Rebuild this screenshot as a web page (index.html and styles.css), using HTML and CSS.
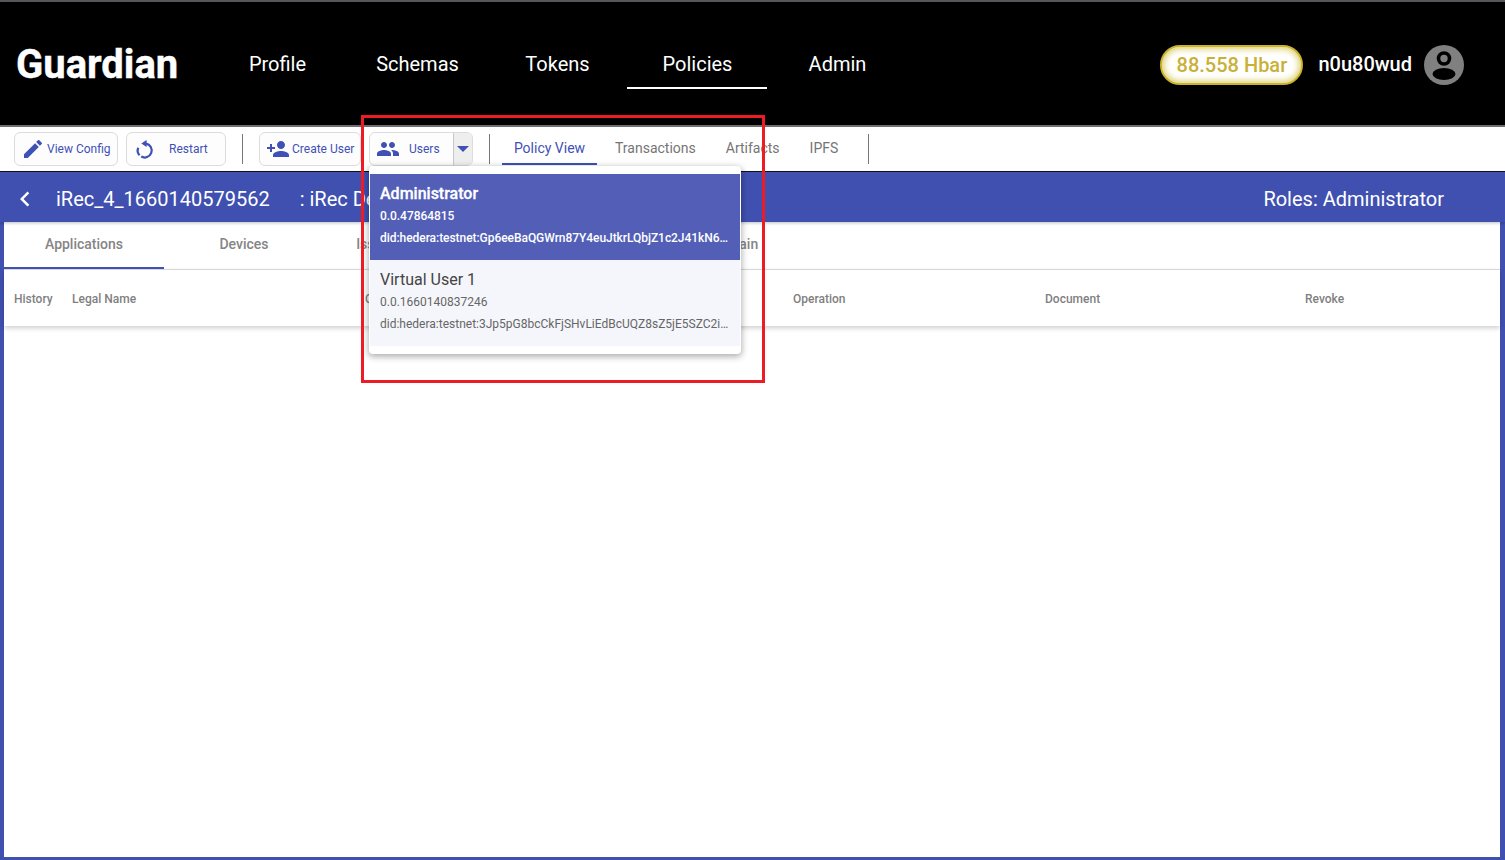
FILE: index.html
```html
<!DOCTYPE html>
<html lang="en">
<head>
    <meta charset="UTF-8">
    <meta name="viewport" content="width=device-width, initial-scale=1.0">
    <title>Guardian</title>
    <link rel="stylesheet" href="styles.css">
</head>
<body>
    <header class="header">
        <div class="logo">Guardian</div>
        <nav class="nav">
            <a class="nav-item">Profile</a>
            <a class="nav-item">Schemas</a>
            <a class="nav-item">Tokens</a>
            <a class="nav-item active">Policies</a>
            <a class="nav-item">Admin</a>
        </nav>
        <div class="account">
            <div class="balance">88.558 Hbar</div>
            <div class="username">n0u80wud</div>
            <svg class="avatar" viewBox="0 0 40 40">
                <circle cx="20" cy="20" r="20" fill="#808080"/>
                <circle cx="20" cy="13.5" r="5.5" fill="none" stroke="#000" stroke-width="3.6"/>
                <ellipse cx="20" cy="29" rx="11.5" ry="6" fill="#000"/>
            </svg>
        </div>
    </header>

    <div class="toolbar">
        <button class="btn btn-config">
            <svg class="icon" viewBox="0 0 24 24"><path d="M3 17.25V21h3.75L17.81 9.94l-3.75-3.75L3 17.25zM20.71 7.04a1 1 0 0 0 0-1.41l-2.34-2.34a1 1 0 0 0-1.41 0l-1.83 1.83 3.75 3.75 1.83-1.83z"/></svg>
            <span>View Config</span>
        </button>
        <button class="btn btn-restart">
            <svg class="icon icon-restart" viewBox="0 0 24 24">
                <path d="M13 6.62A7 7 0 1 1 8.2 19.56"/>
                <path d="M6.6 18.3A7 7 0 0 1 5.3 10.7"/>
                <polygon points="13.6,3 13.6,10 8.3,6.5"/>
            </svg>
            <span>Restart</span>
        </button>
        <div class="sep sep-first"></div>
        <button class="btn btn-create">
            <svg class="icon" viewBox="0 0 24 24"><path d="M15 12c2.21 0 4-1.79 4-4s-1.79-4-4-4-4 1.79-4 4 1.79 4 4 4zm-9-2V7H4v3H1v2h3v3h2v-3h3v-2H6zm9 4c-2.67 0-8 1.34-8 4v2h16v-2c0-2.66-5.33-4-8-4z"/></svg>
            <span>Create User</span>
        </button>
        <div class="split">
            <div class="split-main">
                <svg class="icon" viewBox="0 0 24 24"><path d="M16 11c1.66 0 2.99-1.34 2.99-3S17.66 5 16 5c-1.66 0-3 1.34-3 3s1.34 3 3 3zm-8 0c1.66 0 2.99-1.34 2.99-3S9.66 5 8 5C6.34 5 5 6.34 5 8s1.34 3 3 3zm0 2c-2.33 0-7 1.17-7 3.5V19h14v-2.5c0-2.33-4.67-3.5-7-3.5zm8 0c-.29 0-.62.02-.97.05 1.16.84 1.97 1.97 1.97 3.45V19h6v-2.5c0-2.33-4.67-3.5-7-3.5z"/></svg>
                <span>Users</span>
            </div>
            <div class="split-arrow"></div>
        </div>
        <div class="sep sep-tabs"></div>
        <div class="view-tabs">
            <a class="view-tab active">Policy View</a>
            <a class="view-tab tab-trans">Transactions</a>
            <a class="view-tab tab-art">Artifacts</a>
            <a class="view-tab tab-ipfs">IPFS</a>
        </div>
        <div class="sep sep-last"></div>
    </div>

    <main class="content">
        <div class="policy-bar">
            <svg class="back" viewBox="0 0 24 24"><path d="M15.41 7.41 14 6l-6 6 6 6 1.41-1.41L10.83 12z"/></svg>
            <span class="policy-name">iRec_4_1660140579562</span>
            <span class="policy-desc">: iRec Demo</span>
            <span class="roles">Roles: Administrator</span>
        </div>

        <div class="tabs">
            <a class="tab active">Applications</a>
            <a class="tab">Devices</a>
            <a class="tab">Issue Requests</a>
            <a class="tab">Token History</a>
            <a class="tab">TrustChain</a>
        </div>

        <div class="table-head">
            <span>History</span>
            <span>Legal Name</span>
            <span>Operator</span>
            <span>Operation</span>
            <span>Document</span>
            <span>Revoke</span>
        </div>
    </main>

    <div class="user-menu">
        <div class="user-item selected">
            <div class="user-name">Administrator</div>
            <div class="user-line">0.0.47864815</div>
            <div class="user-line">did:hedera:testnet:Gp6eeBaQGWrn87Y4euJtkrLQbjZ1c2J41kN6…</div>
        </div>
        <div class="user-item">
            <div class="user-name">Virtual User 1</div>
            <div class="user-line">0.0.1660140837246</div>
            <div class="user-line">did:hedera:testnet:3Jp5pG8bcCkFjSHvLiEdBcUQZ8sZ5jE5SZC2i…</div>
        </div>
    </div>

    <div class="highlight"></div>
</body>
</html>
```

FILE: styles.css
```css
* {
    box-sizing: border-box;
}
html, body {
    margin: 0;
    height: 860px;
    overflow: hidden;
}
body {
    font-family: Roboto, "Liberation Sans", sans-serif;
    background: #fff;
    display: flex;
    flex-direction: column;
    position: relative;
}

/* header */
.header {
    height: 127px;
    flex: none;
    background: #000;
    color: #fff;
    border-top: 2px solid #55565a;
    border-bottom: 2px solid #6e6e6e;
    display: flex;
    align-items: center;
    padding-left: 16px;
    padding-right: 41px;
}
.logo {
    width: 191px;
    padding-top: 2px;
    font-size: 40px;
    font-weight: 700;
    -webkit-text-stroke: 0.4px #fff;
}
.nav {
    display: flex;
    align-self: stretch;
    padding-top: 36px;
}
.nav-item {
    width: 140px;
    height: 51px;
    line-height: 52px;
    padding-left: 1px;
    text-align: center;
    font-size: 20px;
}
.nav-item.active {
    border-bottom: 2px solid #fff;
}
.account {
    margin-left: auto;
    margin-top: 2px;
    display: flex;
    align-items: center;
}
.balance {
    width: 143px;
    height: 40px;
    line-height: 36px;
    border: 2px solid #c9b32a;
    border-radius: 20px;
    background: #fff;
    box-shadow: inset 0 0 6px 2px #dccf6c;
    color: #c9b037;
    font-size: 20px;
    font-weight: 500;
    text-align: center;
}
.username {
    margin-left: 15px;
    margin-top: -2px;
    font-size: 20px;
    font-weight: 500;
}
.avatar {
    width: 40px;
    height: 40px;
    margin-left: 12px;
}

/* toolbar */
.toolbar {
    height: 45px;
    flex: none;
    background: #fff;
    border-bottom: 1px solid #111;
    display: flex;
    align-items: flex-start;
    padding: 5px 0 0 14px;
}
.btn, .split {
    height: 34px;
    background: #fdfdfe;
    border: 1px solid #dcdcdc;
    border-radius: 6px;
    color: #3f51b5;
    font-family: inherit;
    font-size: 12px;
    padding: 0;
    display: flex;
    align-items: center;
}
.icon {
    width: 24px;
    height: 24px;
    fill: #3f51b5;
    flex: none;
}
.icon-restart path {
    fill: none;
    stroke: #3f51b5;
    stroke-width: 2.2;
}
.btn-config {
    width: 104px;
    padding-left: 6px;
    margin-right: 8px;
}
.btn-config span {
    margin-left: 2px;
}
.btn-restart {
    width: 100px;
    padding-left: 6px;
}
.btn-restart span {
    margin-left: 12px;
}
.btn-create {
    width: 102px;
    padding-left: 6px;
    margin-right: 8px;
}
.btn-create span {
    margin-left: 2px;
}
.split {
    width: 104px;
    overflow: hidden;
}
.split-main {
    width: 84px;
    display: flex;
    align-items: center;
    padding-left: 6px;
}
.split-main span {
    margin-left: 9px;
}
.split-arrow {
    width: 19px;
    height: 100%;
    background: #eeeeee;
    border-left: 1px solid #c8c8c8;
    position: relative;
}
.split-arrow::after {
    content: "";
    position: absolute;
    left: 3px;
    top: 13px;
    border-left: 6px solid transparent;
    border-right: 6px solid transparent;
    border-top: 6px solid #3f51b5;
}
.sep {
    width: 1px;
    height: 30px;
    margin-top: 2px;
    background: #777;
    flex: none;
}
.sep-first {
    margin-left: 16px;
    margin-right: 16px;
}
.sep-tabs {
    margin-left: 16px;
    margin-right: 12px;
}
.view-tabs {
    display: flex;
    width: 366px;
}
.view-tab {
    height: 33px;
    line-height: 32px;
    font-size: 14px;
    color: #757575;
    text-align: center;
}
.view-tab.active {
    width: 95px;
    color: #3f51b5;
    border-bottom: 2px solid #3f51b5;
}
.tab-trans {
    margin-left: 18px;
}
.tab-art {
    margin-left: 30px;
}
.tab-ipfs {
    margin-left: 30px;
}

/* policy area */
.content {
    flex: 1;
    border-left: 4px solid #3f50b0;
    border-right: 5px solid #3f50b0;
    border-bottom: 3px solid #3f50b0;
}
.policy-bar {
    height: 50px;
    background: #3f50b0;
    margin-left: -4px;
    margin-right: -5px;
    padding-top: 4px;
    color: #fff;
    font-size: 20px;
    display: flex;
    align-items: center;
    position: relative;
    z-index: 1;
    box-shadow: 0 1px 3px rgba(0, 0, 0, 0.25);
}
.back {
    width: 30px;
    height: 30px;
    fill: #fff;
    margin-left: 10px;
}
.policy-name {
    margin-left: 16px;
}
.policy-desc {
    margin-left: 30px;
}
.roles {
    margin-left: auto;
    margin-right: 61px;
}
.tabs {
    display: flex;
    height: 48px;
    border-bottom: 1px solid #dddddd;
}
.tab {
    width: 160px;
    height: 47px;
    line-height: 44px;
    text-align: center;
    font-size: 14px;
    font-weight: 500;
    color: #858585;
}
.tab.active {
    border-bottom: 2px solid #3f51b5;
}
.table-head {
    height: 56px;
    display: grid;
    grid-template-columns: 58px 293px 428px 252px 260px 1fr;
    align-items: center;
    padding: 2px 0 0 10px;
    font-size: 12px;
    font-weight: 500;
    color: #7f7f7f;
    box-shadow: 0 2px 5px rgba(0, 0, 0, 0.2);
}

/* dropdown lies over the page */
.user-menu {
    position: absolute;
    left: 369px;
    top: 166px;
    width: 372px;
    height: 188px;
    padding: 8px 1px;
    background: #fff;
    border-radius: 4px;
    box-shadow: 0 2px 6px 1px rgba(0, 0, 0, 0.3);
    z-index: 2;
}
.user-item {
    height: 86px;
    padding: 10px 10px 0;
    background: #f5f6fb;
    color: #666;
}
.user-name {
    height: 20px;
    line-height: 20px;
    font-size: 16px;
    color: #444;
}
.user-line {
    margin-top: 4px;
    height: 18px;
    line-height: 18px;
    font-size: 12px;
    white-space: nowrap;
}
.user-name + .user-line {
    margin-top: 3px;
}
.user-item.selected {
    background: #535fb7;
    color: #fff;
    font-weight: 500;
}
.user-item.selected .user-line {
    letter-spacing: -0.05px;
}
.user-item.selected .user-name {
    color: #fff;
    -webkit-text-stroke: 0.3px #fff;
}

/* red annotation box */
.highlight {
    position: absolute;
    left: 361px;
    top: 115px;
    width: 404px;
    height: 268px;
    border: 3px solid #ed1c24;
    z-index: 3;
}
```
